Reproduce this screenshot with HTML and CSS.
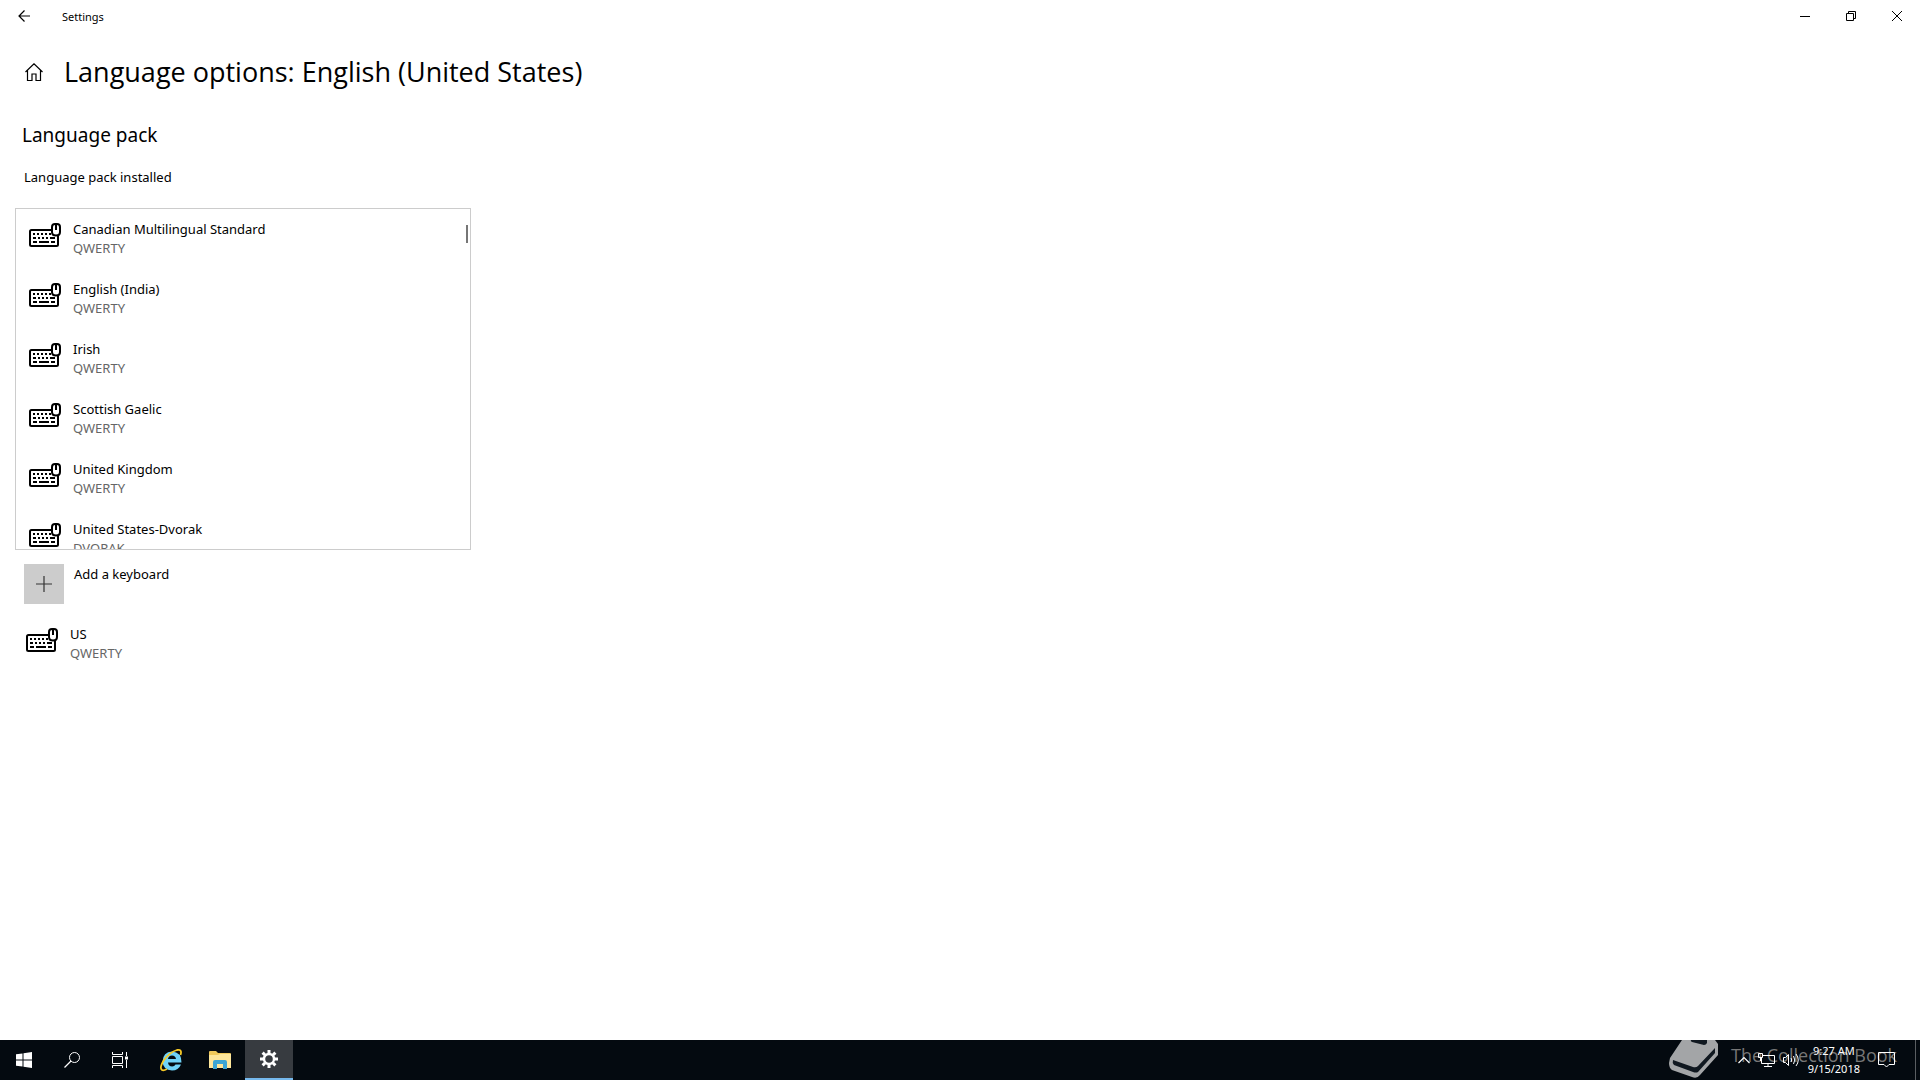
FILE: index.html
```html
<!DOCTYPE html>
<html lang="en">
<head>
  <meta charset="UTF-8" />
  <meta name="viewport" content="width=device-width, initial-scale=1.0"/>
  <title>Settings</title>
  <link rel="stylesheet" href="styles.css">
</head>
<body>

  <!-- Icons used more than once -->
  <svg class="sprite" aria-hidden="true">
    <symbol id="icon-keyboard" viewBox="0 0 32 24">
      <path d="M23 7H2.500Q1 7 1 8.500V21.500Q1 23 2.500 23H27.500Q29 23 29 21.500V12" fill="none" stroke="#000" stroke-width="2"/>
      <path d="M4 11h2M8 11h2M12 11h2M16 11h2M20 11h2M4 15h3M9 15h2M13 15h2M17 15h2M21 15h5M4 19h4M10 19h10M22 19h4" stroke="#000" stroke-width="2"/>
      <path d="M23 4Q23 1 26 1H28Q31 1 31 4V9Q31 12.500 27 12.500Q23 12.500 23 9Z" fill="#fff" stroke="#000" stroke-width="2"/>
      <path d="M27 2v5" stroke="#000" stroke-width="2"/>
    </symbol>
  </svg>

  <!-- Title bar -->
  <header class="title-bar">
    <button class="back-btn" aria-label="Back">
      <svg width="12" height="12" viewBox="0 0 12 12"><path d="M12 6H1M6.500 .5L1 6L6.500 11.500" fill="none" stroke="#000" stroke-width="1.200"/></svg>
    </button>
    <span class="app-name">Settings</span>
    <div class="window-buttons">
      <button aria-label="Minimize"><svg width="10" height="10" viewBox="0 0 10 10"><path d="M0 5.500H10" stroke="#000"/></svg></button>
      <button aria-label="Restore"><svg width="10" height="10" viewBox="0 0 10 10"><path d="M.5 2.500H7.500V9.500H.5ZM2.500 2.500V.5H9.500V7.500H7.500" fill="none" stroke="#000"/></svg></button>
      <button aria-label="Close"><svg width="10" height="10" viewBox="0 0 10 10"><path d="M0 0L10 10M10 0L0 10" stroke="#000"/></svg></button>
    </div>
  </header>

  <!-- Settings page -->
  <main class="page">
    <div class="page-header">
      <a href="#" class="home-link" aria-label="Home">
        <svg width="18" height="18" viewBox="0 0 18 18"><path d="M.5 9L9 .8L17.500 9M2.500 7.500V17.500H7V11H11V17.500H15.500V7.500" fill="none" stroke="#000" stroke-width="1.200"/></svg>
      </a>
      <h1>Language options: English (United States)</h1>
    </div>

    <h2>Language pack</h2>
    <p class="pack-status">Language pack installed</p>

    <div class="keyboard-list">
      <button class="keyboard"><svg class="keyboard-icon"><use href="#icon-keyboard"/></svg><span class="details">Canadian Multilingual Standard<small>QWERTY</small></span></button>
      <button class="keyboard"><svg class="keyboard-icon"><use href="#icon-keyboard"/></svg><span class="details">English (India)<small>QWERTY</small></span></button>
      <button class="keyboard"><svg class="keyboard-icon"><use href="#icon-keyboard"/></svg><span class="details">Irish<small>QWERTY</small></span></button>
      <button class="keyboard"><svg class="keyboard-icon"><use href="#icon-keyboard"/></svg><span class="details">Scottish Gaelic<small>QWERTY</small></span></button>
      <button class="keyboard"><svg class="keyboard-icon"><use href="#icon-keyboard"/></svg><span class="details">United Kingdom<small>QWERTY</small></span></button>
      <button class="keyboard"><svg class="keyboard-icon"><use href="#icon-keyboard"/></svg><span class="details">United States-Dvorak<small>DVORAK</small></span></button>
      <div class="scroll-thumb"></div>
    </div>

    <button class="add-keyboard">
      <span class="plus"><svg width="16" height="16" viewBox="0 0 16 16"><path d="M0 8H16M8 0V16" stroke="#333" stroke-width="1.200"/></svg></span>
      <span>Add a keyboard</span>
    </button>

    <button class="keyboard installed"><svg class="keyboard-icon"><use href="#icon-keyboard"/></svg><span class="details">US<small>QWERTY</small></span></button>
  </main>

  <!-- Taskbar -->
  <footer class="taskbar">
    <nav class="tasks">
      <button class="task" aria-label="Start">
        <svg width="16" height="16" viewBox="0 0 16 16"><path d="M0 2.300L6.500 1.400V7.500H0ZM7.500 1.200L16 0V7.500H7.500ZM0 8.500H6.500V14.600L0 13.700ZM7.500 8.500H16V16L7.500 14.800Z" fill="#fff"/></svg>
      </button>
      <button class="task" aria-label="Search">
        <svg width="16" height="16" viewBox="0 0 16 16"><circle cx="10.500" cy="5.500" r="5" fill="none" stroke="#fff"/><path d="M7 9L.5 15.500" stroke="#fff" stroke-width="1.200"/></svg>
      </button>
      <button class="task" aria-label="Task View">
        <svg width="16" height="16" viewBox="0 0 16 16"><path d="M.5 0V2.500H10.500V0M.5 4.500H10.500V11.500H.5ZM.5 16V13.500H10.500V16M14.500 0V4M14.500 8V16" fill="none" stroke="#fff"/><path d="M13 4.500H16V7.500H13Z" fill="#fff"/></svg>
      </button>
    </nav>
    <nav class="apps">
      <button class="task" aria-label="Internet Explorer">
        <svg width="24" height="24" viewBox="0 0 24 24">
          <path d="M22 16.500Q19.500 22.500 13 22.500Q4 22 3.500 13.500Q4 4 13 3.500Q22.500 4 22.500 14.500H9Q9.500 18.500 13.200 18.500Q15.500 18.500 16.500 16.500ZM9 11H17Q16.500 7.500 13 7.500Q9.500 7.500 9 11Z" fill="#6fd3f8" fill-rule="evenodd"/>
          <path d="M21.500 7Q23.500 1 18 2Q11 4 5 12Q0 20 3 22Q4.500 23 8 21" fill="none" stroke="#f6c927" stroke-width="1.800"/>
        </svg>
      </button>
      <button class="task" aria-label="File Explorer">
        <svg width="22" height="18" viewBox="0 0 22 18">
          <path d="M0 1Q0 0 1 0H7L9 2H21Q22 2 22 3V17H0Z" fill="#f0c95a"/>
          <path d="M0 4H9L11 3H22V17H0Z" fill="#fde69a"/>
          <path d="M4 18V11Q4 9 6 9H16Q18 9 18 11V18H14V13H8V18Z" fill="#3aa5d4"/>
        </svg>
      </button>
      <button class="task active" aria-label="Settings">
        <svg width="18" height="18" viewBox="0 0 18 18">
          <circle cx="9" cy="9" r="5" fill="none" stroke="#fff" stroke-width="2.400"/>
          <path d="M9 0V3.500M9 14.500V18M0 9H3.500M14.500 9H18M2.600 2.600L5 5M13 13L15.400 15.400M2.600 15.400L5 13M13 5L15.400 2.600" stroke="#fff" stroke-width="3"/>
        </svg>
      </button>
    </nav>

    <div class="tray">
      <button aria-label="Show hidden icons"><svg width="12" height="8" viewBox="0 0 12 8"><path d="M.5 7L6 1.500L11.500 7" fill="none" stroke="#fff" stroke-width="1.200"/></svg></button>
      <button aria-label="Network"><svg width="17" height="14" viewBox="0 0 17 14"><path d="M5 2.500H16.500V10.500H3.500V5M10 10.500V13M6 13.500H14" fill="none" stroke="#fff"/><path d="M.5 .5H4.500V4.500H.5ZM2.500 4.500V8" fill="none" stroke="#fff"/></svg></button>
      <button aria-label="Volume"><svg width="17" height="14" viewBox="0 0 17 14"><path d="M.5 4.500H2.500L5.500 1.500V12.500L2.500 9.500H.5ZM8 5Q9.500 7 8 9M10.500 3Q13 7 10.500 11M13 1Q17.500 7 13 13" fill="none" stroke="#fff"/></svg></button>
      <button class="clock"><span>9:27 AM</span><span>9/15/2018</span></button>
      <button class="notifications" aria-label="Notifications"><svg width="17" height="16" viewBox="0 0 17 16"><path d="M.5 .5H16.500V12.500H11L8.500 15L6 12.500H.5Z" fill="none" stroke="#fff"/></svg></button>
      <button class="show-desktop" aria-label="Show desktop"></button>
    </div>

    <div class="watermark">
      <svg width="50" height="40" viewBox="0 0 50 40">
        <path d="M1 18L13 0H46L49 4V15L31 35Q28 39 23 37L3 30Q0 28 0 23Z" fill="#a3a5a7"/>
        <path d="M4 20L24 27Q27 28 29 26L46 8V13L29 32Q27 33 24 32L5 25Q3 23 4 20Z" fill="#101820"/>
        <path d="M22 0H38V3Q37 5 35 5L23 2Q21 1 22 0Z" fill="#101820"/>
      </svg>
      <span>The Collection Book</span>
    </div>
  </footer>

</body>
</html>
```

FILE: styles.css
```css
/* === GLOBAL === */
* {
  box-sizing: border-box;
  margin: 0;
  padding: 0;
}

body {
  display: flex;
  flex-direction: column;
  min-height: 100vh;
  background: #fff;
  color: #000;
  font-family: 'Segoe UI', 'Noto Sans', sans-serif;
  font-size: 13px;
  line-height: 19px;
}

button {
  background: none;
  border: none;
  color: inherit;
  font: inherit;
  text-align: left;
}

svg {
  display: block;
}

.sprite {
  display: none;
}

/* === TITLE BAR === */
.title-bar {
  display: flex;
  align-items: center;
  height: 32px;
}

.back-btn {
  width: 48px;
  height: 32px;
  padding-left: 18px;
}

.app-name {
  flex: 1;
  padding-left: 14px;
  font-size: 11px;
}

.window-buttons {
  display: flex;
}

.window-buttons button {
  display: flex;
  align-items: center;
  justify-content: center;
  width: 46px;
  height: 32px;
}

/* === PAGE === */
.page {
  flex: 1;
  padding: 16px 15px;
}

.page-header {
  display: flex;
  align-items: center;
  gap: 21px;
  height: 48px;
  padding-left: 10px;
}

h1 {
  font-size: 27px;
  font-weight: 400;
  line-height: 36px;
  font-family: 'Segoe UI', 'Open Sans', sans-serif;
}

h2 {
  margin: 25px 0 0 7px;
  font-size: 19px;
  font-weight: 400;
  line-height: 28px;
}

.pack-status {
  margin: 19px 0 0 9px;
}

/* === KEYBOARDS === */
.keyboard-list {
  position: relative;
  width: 456px;
  height: 342px;
  margin-top: 21px;
  border: 1px solid #ccc;
  overflow: hidden;
}

.keyboard {
  display: flex;
  gap: 12px;
  width: 100%;
  height: 60px;
  padding: 11px 0 0 13px;
}

.keyboard-icon {
  width: 32px;
  height: 24px;
  margin-top: 3px;
}

.details small {
  display: block;
  color: #666;
  font-size: 13px;
}

.scroll-thumb {
  position: absolute;
  top: 16px;
  right: 2px;
  width: 2px;
  height: 18px;
  background: #767676;
}

.add-keyboard {
  display: flex;
  gap: 10px;
  margin: 14px 0 0 9px;
  line-height: 20px;
}

.plus {
  display: flex;
  align-items: center;
  justify-content: center;
  width: 40px;
  height: 40px;
  background: #ccc;
}

.installed {
  margin-top: 10px;
  padding-left: 11px;
}

/* === TASKBAR === */
.taskbar {
  position: relative;
  display: flex;
  height: 40px;
  background: #040a10;
  color: #fff;
  overflow: hidden;
}

.tasks,
.apps {
  display: flex;
}

.apps {
  gap: 1px;
  margin-left: 3px;
}

.task {
  display: flex;
  align-items: center;
  justify-content: center;
  width: 48px;
  height: 40px;
}

.active {
  background: #373b40;
  border-bottom: 2px solid #76b9ed;
}

.tray {
  z-index: 1;
  display: flex;
  align-items: center;
  gap: 8px;
  margin-left: auto;
}

.clock {
  display: flex;
  flex-direction: column;
  font-size: 11px;
  line-height: 18px;
  text-align: center;
}

.notifications {
  margin: 0 12px 0 10px;
}

.show-desktop {
  width: 5px;
  height: 40px;
  border-left: 1px solid #5a5e62;
}

.watermark {
  position: absolute;
  right: 23px;
  top: 0;
  display: flex;
  gap: 12px;
  color: #777;
  font-family: 'Segoe UI', 'Open Sans', sans-serif;
  font-size: 18px;
  line-height: 30px;
  pointer-events: none;
}
```
